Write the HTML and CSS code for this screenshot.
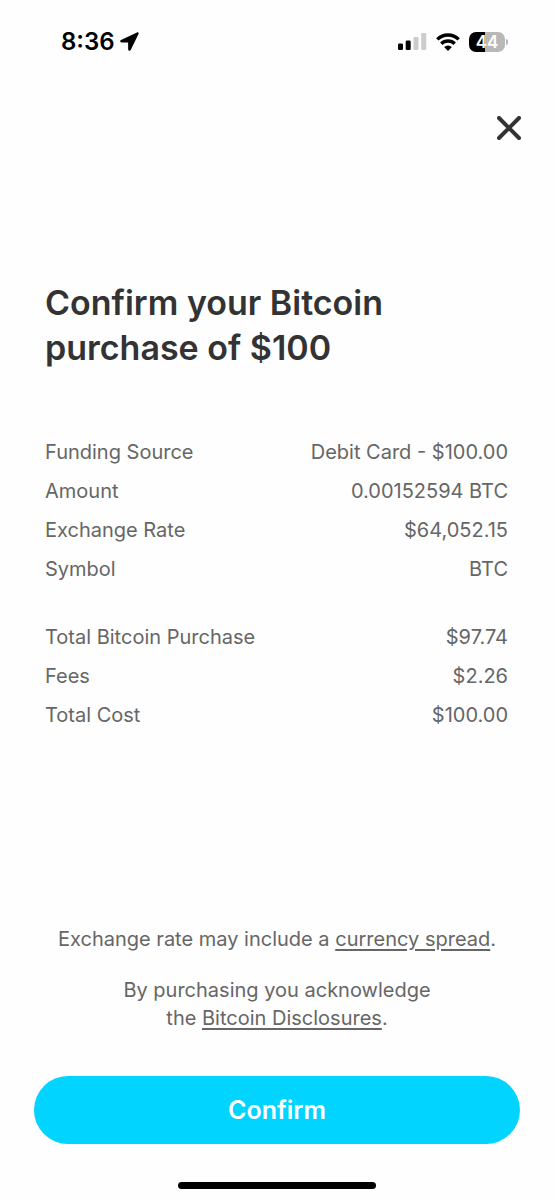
FILE: index.html
```html
<!DOCTYPE html>
<html lang="en">
<head>
<meta charset="utf-8">
<meta name="viewport" content="width=device-width, initial-scale=1">
<title>Confirm purchase</title>
<link rel="stylesheet" href="styles.css">
</head>
<body>
<div class="screen">
  <div class="status">
    <div class="status-left">
      <span>8:36</span>
      <svg class="location" width="19" height="20" viewBox="0 0 19 20" aria-hidden="true"><path d="M17 .5 1 8c-1.3.7-1 2.5.5 2.5l6.6.1.1 6.8c0 1.6 1.9 1.9 2.5.6L18.5 1.9c.4-.9-.4-1.9-1.5-1.4z"/></svg>
    </div>
    <div class="status-right">
      <svg width="29" height="18" viewBox="0 0 29 18" aria-hidden="true"><rect x="0" y="10.5" width="5" height="6.5" rx="1.3"/><rect x="7.7" y="7.5" width="5" height="9.5" rx="1.3"/><g fill="#cccccc"><rect x="15.5" y="4" width="5" height="13" rx="1.3"/><rect x="23.2" y="0" width="5" height="17" rx="1.3"/></g></svg>
      <svg width="24" height="18" viewBox="0 0 24 18" aria-hidden="true"><g fill="none" stroke="#000" stroke-width="3.4"><path d="M1.3 6.4a15.2 15.2 0 0 1 21.4 0"/><path d="M5.3 10.7a9.5 9.5 0 0 1 13.4 0"/></g><path d="M12 18 8.1 14.1a5.5 5.5 0 0 1 7.8 0z"/></svg>
      <div class="battery"><span class="battery-body">44</span><span class="battery-cap"></span></div>
    </div>
  </div>
  <header class="topbar">
    <button class="close" type="button" aria-label="Close">
      <svg width="24" height="24" viewBox="0 0 24 24" aria-hidden="true"><path d="M2 2l20 20M22 2 2 22" fill="none" stroke="#333" stroke-width="4" stroke-linecap="round"/></svg>
    </button>
  </header>
  <main class="content">
    <h1 class="title">Confirm your Bitcoin purchase of $100</h1>
    <dl class="details">
      <div class="row"><dt>Funding Source</dt><dd>Debit Card - $100.00</dd></div>
      <div class="row"><dt>Amount</dt><dd>0.00152594 BTC</dd></div>
      <div class="row"><dt>Exchange Rate</dt><dd>$64,052.15</dd></div>
      <div class="row"><dt>Symbol</dt><dd>BTC</dd></div>
    </dl>
    <dl class="details">
      <div class="row"><dt>Total Bitcoin Purchase</dt><dd>$97.74</dd></div>
      <div class="row"><dt>Fees</dt><dd>$2.26</dd></div>
      <div class="row"><dt>Total Cost</dt><dd>$100.00</dd></div>
    </dl>
  </main>
  <footer class="footer">
    <p class="note">Exchange rate may include a <a class="link" href="#">currency spread</a>.</p>
    <p class="note">By purchasing you acknowledge<br>the <a class="link" href="#">Bitcoin Disclosures</a>.</p>
    <button class="confirm" type="button">Confirm</button>
    <div class="home"></div>
  </footer>
</div>
</body>
</html>
```
FILE: styles.css
```css
* { box-sizing: border-box; }
body {
  margin: 0;
  background: #fefefe;
  color: #666;
  font-family: Inter, "Liberation Sans", sans-serif;
  font-size: 20px;
  line-height: 28px;
}
.screen {
  min-height: 100vh;
  display: flex;
  flex-direction: column;
}
.status {
  display: flex;
  justify-content: space-between;
  align-items: center;
  padding: 28px 46px 0 61px;
  color: #000;
}
.status-left {
  display: flex;
  align-items: center;
  gap: 5px;
  font-size: 24px;
  font-weight: 600;
}
.status-right {
  display: flex;
  align-items: center;
  gap: 9px;
}
.battery {
  display: flex;
  align-items: center;
  gap: 1px;
}
.battery-body {
  width: 36px;
  border-radius: 7px;
  background: linear-gradient(to right, #000 44%, #b8b8b8 44%);
  color: #fff;
  font-size: 17px;
  font-weight: 600;
  line-height: 20px;
  text-align: center;
}
.battery-cap {
  width: 2px;
  height: 6px;
  border-radius: 0 2px 2px 0;
  background: #b8b8b8;
}
.topbar {
  display: flex;
  justify-content: flex-end;
  padding: 52px 25px 0;
}
.close {
  display: flex;
  padding: 8px;
  border: 0;
  background: none;
  cursor: pointer;
}
.content { padding: 132px 46px 0 45px; }
.title {
  max-width: 380px;
  margin: 0 0 68px;
  color: #333;
  font-size: 34px;
  font-weight: 600;
  line-height: 45px;
}
.details {
  display: flex;
  flex-direction: column;
  gap: 11px;
  margin: 0 0 40px;
}
.row {
  display: flex;
  justify-content: space-between;
}
.row dd { margin: 0; }
.footer {
  display: flex;
  flex-direction: column;
  margin-top: auto;
  padding: 0 34px 11px;
}
.note {
  margin: 0 0 23px;
  text-align: center;
}
.link {
  color: inherit;
  text-underline-offset: 3px;
}
.confirm {
  height: 68px;
  margin: 21px 0 38px;
  border: 0;
  border-radius: 34px;
  background: #00d4ff;
  color: #fff;
  font: inherit;
  font-size: 25px;
  font-weight: 600;
  cursor: pointer;
}
.home {
  align-self: center;
  width: 198px;
  height: 7px;
  border-radius: 4px;
  background: #000;
}
```
